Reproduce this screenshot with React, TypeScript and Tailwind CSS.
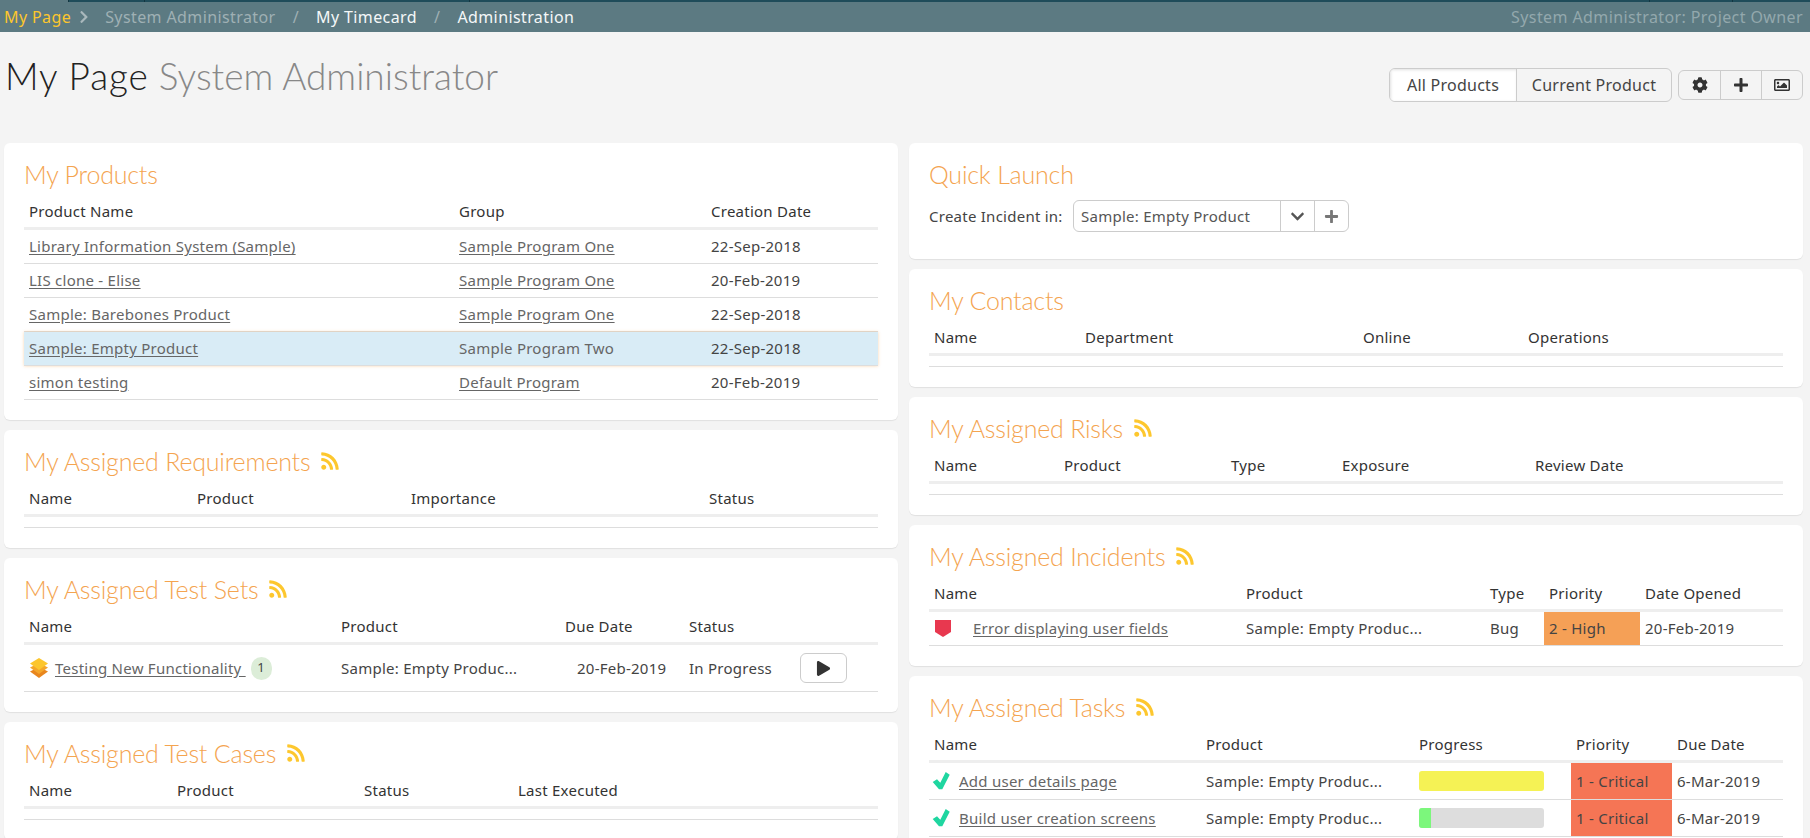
import type { ReactNode } from 'react'
import { FaChevronDown, FaChevronRight, FaCog, FaPlay, FaPlus, FaRegImage, FaRss } from 'react-icons/fa'

const Card = ({ children }: { children: ReactNode }) => (
    <section className="rounded-md bg-white px-5 pb-5 shadow-[0_1px_1px_rgba(0,0,0,0.08)]">{children}</section>
)

const Title = ({ text, rss = true }: { text: string; rss?: boolean }) => (
    <h2 className="flex h-[50px] items-center gap-[10px] pt-3 font-['Lato',sans-serif] text-[25px] leading-none font-light tracking-[-0.2px] text-[#f4a450]">
        {text}
        {rss && <FaRss className="size-5 text-[#fdc72e]" />}
    </h2>
)

const Head = ({ cols, labels }: { cols: string; labels: string[] }) => (
    <div className={`grid h-[37px] items-center border-b-[3px] border-[#eeeeee] pt-[2px] pl-[5px] text-[#333] ${cols}`}>
        {labels.map((label) => (
            <div key={label}>{label}</div>
        ))}
    </div>
)

const Empty = () => <div className="h-[11px] border-b border-[#dddddd]" />

const Link = ({ children }: { children: ReactNode }) => <a className="text-[#666] underline underline-offset-2">{children}</a>

const Row = ({ cols, children, className = '' }: { cols: string; children: ReactNode; className?: string }) => (
    <div className={`grid items-center border-b border-[#dddddd] pl-[5px] text-[#444] ${cols} ${className}`}>{children}</div>
)

const products = [
    ['Library Information System (Sample)', 'Sample Program One', '22-Sep-2018'],
    ['LIS clone - Elise', 'Sample Program One', '20-Feb-2019'],
    ['Sample: Barebones Product', 'Sample Program One', '22-Sep-2018'],
    ['Sample: Empty Product', 'Sample Program Two', '22-Sep-2018'],
    ['simon testing', 'Default Program', '20-Feb-2019'],
]

const StackIcon = () => (
    <svg viewBox="1 0 18 20" className="ml-px h-5 w-[18px] shrink-0">
        <path d="M10 9 19 13.5 10 20 1 13.5Z" fill="#e8861e" />
        <path d="M10 5 19 9.5 10 16 1 9.5Z" fill="#f4a62a" />
        <path d="M10 0 19 5.5 10 12 1 5.5Z" fill="#fcc62d" />
    </svg>
)

const TaskCheck = () => (
    <svg viewBox="0 0 18 18" className="-ml-[2px] size-[18px] shrink-0">
        <path d="M.7 10 5 7.3 8.3 10.7 13.7 0 17.7 2.7 10.3 17.3H7Z" fill="#1fd6a0" />
    </svg>
)

export default function App() {
    const productCols = 'grid-cols-[430px_252px_1fr]'
    const testSetCols = 'grid-cols-[312px_224px_124px_111px_1fr]'
    const incidentCols = 'grid-cols-[312px_244px_59px_96px_1fr]'
    const taskCols = 'grid-cols-[272px_213px_157px_101px_1fr]'

    return (
        <div className="h-[838px] overflow-hidden bg-[#f4f4f4] font-['Noto_Sans',sans-serif] text-[15px] tracking-[0.25px]">
            <div className="flex h-[2px] bg-[#1f4c5a]">
                <div className="w-[69px] border-r border-[#123540] bg-[#5c7a82]" />
                <div className="w-[76px] border-r border-[#123540]" />
                <div className="w-[325px] border-r border-[#123540]" />
                <div className="w-[1180px] border-r border-[#123540]" />
                <div className="w-[83px] border-r border-[#123540]" />
            </div>
            <nav className="flex h-[30px] items-center bg-[#5c7a82] pr-[7px] pl-1 text-[16px] tracking-[0.4px]">
                <span className="text-[#fcc62d]">My Page</span>
                <FaChevronRight className="mr-[14px] ml-[6px] size-[14px] text-[#a9b8bc]" />
                <span className="text-[#9fb0b4]">System Administrator</span>
                <span className="mx-[17px] text-[#9fb0b4]">/</span>
                <span className="text-[#f4f7f8]">My Timecard</span>
                <span className="mx-[17px] text-[#9fb0b4]">/</span>
                <span className="text-[#f4f7f8]">Administration</span>
                <span className="ml-auto text-[#93a8ad]">System Administrator: Project Owner</span>
            </nav>

            <header className="flex h-[111px] items-start justify-between pr-[7px] pl-[5px]">
                <h1 className="mt-[19px] font-['Lato',sans-serif] text-[37px] leading-[50px] font-light tracking-normal text-[#222]">
                    <span className="tracking-[0.9px]">My Page</span> <span className="text-[#888]">System Administrator</span>
                </h1>
                <div className="mt-9 flex items-start gap-[6px] text-[#444]">
                    <div className="flex h-[34px] w-[283px] overflow-hidden rounded-md border border-[#cccccc] text-[16px]">
                        <div className="flex w-[127px] items-center justify-center border-r border-[#cccccc] bg-white shadow-[inset_1px_1px_3px_rgba(0,0,0,0.12)]">
                            All Products
                        </div>
                        <div className="flex flex-1 items-center justify-center">Current Product</div>
                    </div>
                    <div className="mt-[2px] flex h-[30px] w-[125px] rounded-md border border-[#cccccc] text-[#333]">
                        <div className="flex w-[42px] items-center justify-center border-r border-[#cccccc]">
                            <FaCog className="size-4" />
                        </div>
                        <div className="flex w-[41px] items-center justify-center border-r border-[#cccccc]">
                            <FaPlus className="size-4" />
                        </div>
                        <div className="flex flex-1 items-center justify-center">
                            <FaRegImage className="size-4" />
                        </div>
                    </div>
                </div>
            </header>

            <main className="flex gap-[11px] px-1">
                <div className="flex w-[894px] flex-col gap-[10px]">
                    <Card>
                        <Title text="My Products" rss={false} />
                        <Head cols={productCols} labels={['Product Name', 'Group', 'Creation Date']} />
                        {products.map(([name, group, date]) => {
                            const selected = name === 'Sample: Empty Product'
                            return (
                                <Row
                                    key={name}
                                    cols={productCols}
                                    className={selected ? 'h-[34px] bg-[#d9ecf6] shadow-[0_0_3px_rgba(244,164,80,0.45)]' : 'h-[34px]'}
                                >
                                    <div>
                                        <Link>{name}</Link>
                                    </div>
                                    <div>{selected ? <span className="text-[#666]">{group}</span> : <Link>{group}</Link>}</div>
                                    <div>{date}</div>
                                </Row>
                            )
                        })}
                    </Card>

                    <Card>
                        <Title text="My Assigned Requirements" />
                        <Head cols="grid-cols-[168px_214px_298px_1fr]" labels={['Name', 'Product', 'Importance', 'Status']} />
                        <Empty />
                    </Card>

                    <Card>
                        <Title text="My Assigned Test Sets" />
                        <Head cols={testSetCols} labels={['Name', 'Product', 'Due Date', 'Status', '']} />
                        <Row cols={testSetCols} className="h-[47px]">
                            <div className="flex items-center">
                                <StackIcon />
                                <span className="ml-[7px]">
                                    <Link>Testing New Functionality&nbsp;</Link>
                                </span>
                                <span className="ml-[5px] flex h-[23px] w-[21px] items-center justify-center rounded-full bg-[#dcedd8] text-[13px]">
                                    1
                                </span>
                            </div>
                            <div>Sample: Empty Produc...</div>
                            <div className="pl-3">20-Feb-2019</div>
                            <div>In Progress</div>
                            <button className="flex h-[30px] w-[47px] items-center justify-center rounded-md border border-[#cccccc] text-[#333]">
                                <FaPlay className="size-[15px]" />
                            </button>
                        </Row>
                    </Card>

                    <Card>
                        <Title text="My Assigned Test Cases" />
                        <Head cols="grid-cols-[148px_187px_154px_1fr]" labels={['Name', 'Product', 'Status', 'Last Executed']} />
                        <Empty />
                    </Card>
                </div>

                <div className="flex w-[894px] flex-col gap-[10px]">
                    <Card>
                        <Title text="Quick Launch" rss={false} />
                        <div className="mt-[7px] mb-[7px] flex items-center text-[#444]">
                            <span className="w-[144px]">Create Incident in:</span>
                            <div className="flex h-8 w-[276px] items-center rounded-md border border-[#cccccc]">
                                <span className="w-[206px] pl-[7px] text-[#555]">Sample: Empty Product</span>
                                <span className="flex h-full w-[35px] items-center justify-center border-x border-[#cccccc]">
                                    <FaChevronDown className="size-[15px] text-[#555]" />
                                </span>
                                <span className="flex flex-1 items-center justify-center">
                                    <FaPlus className="size-[15px] text-[#777]" />
                                </span>
                            </div>
                        </div>
                    </Card>

                    <Card>
                        <Title text="My Contacts" rss={false} />
                        <Head cols="grid-cols-[151px_278px_165px_1fr]" labels={['Name', 'Department', 'Online', 'Operations']} />
                        <Empty />
                    </Card>

                    <Card>
                        <Title text="My Assigned Risks" />
                        <Head cols="grid-cols-[130px_167px_111px_193px_1fr]" labels={['Name', 'Product', 'Type', 'Exposure', 'Review Date']} />
                        <Empty />
                    </Card>

                    <Card>
                        <Title text="My Assigned Incidents" />
                        <Head cols={incidentCols} labels={['Name', 'Product', 'Type', 'Priority', 'Date Opened']} />
                        <Row cols={incidentCols} className="h-[34px]">
                            <div className="flex items-center">
                                <svg viewBox="0 0 18 17" className="h-[17px] w-[18px] shrink-0">
                                    <path d="M1 0H17V12L9 17 1 12Z" fill="#e8384f" />
                                </svg>
                                <span className="ml-[21px]">
                                    <Link>Error displaying user fields</Link>
                                </span>
                            </div>
                            <div>Sample: Empty Produc...</div>
                            <div>Bug</div>
                            <div className="-ml-[5px] mr-[5px] flex h-full items-center bg-[#f5a056] pl-[5px]">2 - High</div>
                            <div>20-Feb-2019</div>
                        </Row>
                    </Card>

                    <Card>
                        <Title text="My Assigned Tasks" />
                        <Head cols={taskCols} labels={['Name', 'Product', 'Progress', 'Priority', 'Due Date']} />
                        <Row cols={taskCols} className="h-[37px]">
                            <div className="flex items-center">
                                <TaskCheck />
                                <span className="ml-[9px]">
                                    <Link>Add user details page</Link>
                                </span>
                            </div>
                            <div>Sample: Empty Produc...</div>
                            <div className="h-5 w-[125px] rounded-[3px] bg-[#f5f255]" />
                            <div className="-ml-[5px] mr-[5px] flex h-full items-center bg-[#f57555] pl-[5px]">1 - Critical</div>
                            <div>6-Mar-2019</div>
                        </Row>
                        <Row cols={taskCols} className="h-[37px]">
                            <div className="flex items-center">
                                <TaskCheck />
                                <span className="ml-[9px]">
                                    <Link>Build user creation screens</Link>
                                </span>
                            </div>
                            <div>Sample: Empty Produc...</div>
                            <div className="h-5 w-[125px] overflow-hidden rounded-[3px] bg-[#dddddd]">
                                <div className="h-full w-[12px] bg-[#7cf77c]" />
                            </div>
                            <div className="-ml-[5px] mr-[5px] flex h-full items-center bg-[#f57555] pl-[5px]">1 - Critical</div>
                            <div>6-Mar-2019</div>
                        </Row>
                    </Card>
                </div>
            </main>
        </div>
    )
}
